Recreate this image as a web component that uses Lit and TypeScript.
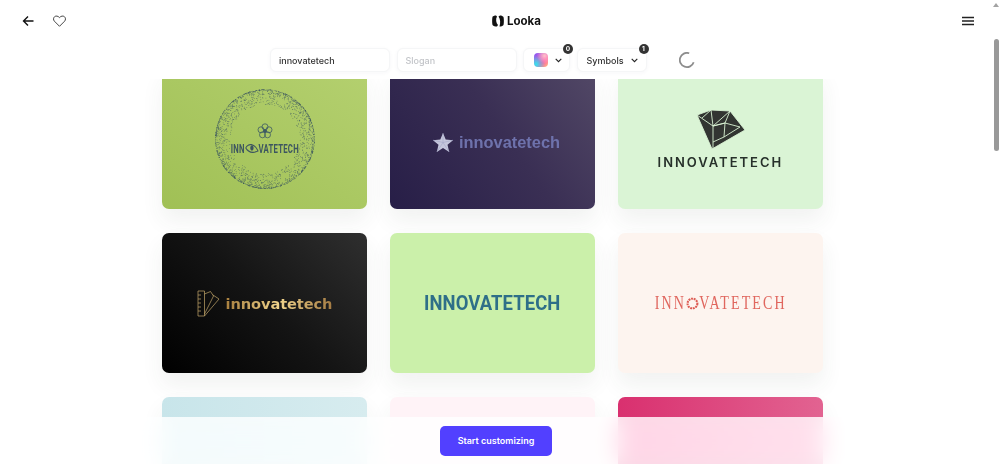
import { LitElement, html, css, svg } from "lit";
import { customElement } from "lit/decorators.js";

function dots() {
  let s = 12345;
  const rnd = () => ((s = (s * 16807) % 2147483647) / 2147483647);
  const out = [];
  for (let i = 0; i < 1900; i++) {
    const a = rnd() * Math.PI * 2;
    const r = 49.500 - Math.pow(rnd(), 2.800) * 15;
    out.push(svg`<circle cx=${50 + r * Math.cos(a)} cy=${50 + r * Math.sin(a)} r="0.38"></circle>`);
  }
  return out;
}
const DOTS = dots();

@customElement("app-root")
export class AppRoot extends LitElement {
  static styles = css`
    :host { display: block; width: 1000px; height: 464px; overflow: hidden; background: #fff; font-family: Inter, "Liberation Sans", sans-serif; color: #222; position: relative; }
    .page { display: grid; grid-template-columns: 992px 8px; height: 464px; }
    .main { display: flex; flex-direction: column; height: 464px; overflow: hidden; position: relative; }
    header { height: 79px; flex: none; background: #fff; position: relative; z-index: 2; }
    .top { display: grid; grid-template-columns: 492px 1fr auto; align-items: center; height: 41px; }
    .left { display: flex; gap: 19px; padding-left: 22px; align-items: center; }
    .brand { display: flex; align-items: center; gap: 3px; font-weight: 700; font-size: 11.5px; color: #111; }
    .menu { display: flex; margin-right: 18px; }
    svg { display: block; }
    .tools { display: flex; gap: 6.5px; padding-left: 270px; padding-top: 7px; align-items: center; }
    .field { box-sizing: border-box; height: 24px; border-radius: 6px; border: 1px solid #f5f6f7; box-shadow: 0 1px 4px rgba(40, 60, 90, .04); display: flex; align-items: center; position: relative; background: #fff; font-size: 9px; font-weight: 500; color: #333; }
    .input { width: 120px; padding-left: 8px; }
    .ph { color: #c2c4c8; }
    .color { width: 47px; padding-left: 10px; gap: 7px; }
    .swatch { width: 14px; height: 14px; border-radius: 4px; background: radial-gradient(circle at 75% 20%, #ffc2c8 0, transparent 50%), radial-gradient(circle at 15% 80%, #2fe6f0 0, transparent 55%), linear-gradient(135deg, #7a5cff, #ff4fb0 60%, #ffc27a); }
    .sym { width: 70px; padding-left: 9px; gap: 7px; }
    .badge { position: absolute; top: -5px; width: 10px; height: 10px; border-radius: 50%; background: #333; color: #fff; font-size: 6.5px; font-weight: 700; display: flex; align-items: center; justify-content: center; }
    .color .badge { right: -4px; }
    .sym .badge { right: -3px; }
    .spin { margin-left: 25.5px; }
    .scroll { flex: 1; min-height: 0; overflow: hidden; }
    .grid { display: grid; grid-template-columns: repeat(3, 205px); gap: 24px 23px; padding-left: 162px; margin-top: -10px; }
    .card { height: 140px; border-radius: 7px; display: flex; flex-direction: column; align-items: center; justify-content: center; box-shadow: 0 12px 22px rgba(60, 70, 60, .07); }
    .c1 { background: linear-gradient(to top right, #a0c055, #b4d06f); }
    .c2 { background: linear-gradient(55deg, #271e47, #3a2f54 55%, #524866); }
    .c3 { background: #daf4d5; }
    .c4 { background: linear-gradient(45deg, #000, #141414 50%, #2f2f2f); }
    .c5 { background: #cbf0aa; }
    .c6 { background: #fdf4ef; }
    .c7 { background: linear-gradient(to right, #c8e5ea, #d7ecef); }
    .c8 { background: #fff3f7; }
    .c9 { background: linear-gradient(to right, #d9306f, #e26391); }
    .circle-logo { position: relative; display: flex; align-items: center; justify-content: center; flex-direction: column; width: 100px; height: 100px; }
    .circle-logo > svg.ring { position: absolute; inset: 0; fill: #3a5560; }
    .t1 { display: flex; align-items: center; font-family: Roboto, sans-serif; font-weight: 700; font-size: 12.5px; color: #3d5660; white-space: nowrap; transform: scaleX(.62); letter-spacing: .4px; margin-top: 2px; }
    .row { display: flex; align-items: center; }
    .lift { margin: 6px 0 0 8px; }
    .t2 { font-family: "Liberation Sans", sans-serif; font-weight: 700; font-size: 16.4px; color: #6e72ac; margin-left: 6px; }
    .t3 { font-family: Inter, sans-serif; font-weight: 600; font-size: 12.5px; letter-spacing: 1.9px; color: #26302a; margin-top: 6px; transform: scaleX(1.04); }
    .t4 { font-family: "DejaVu Sans", sans-serif; font-weight: 700; font-size: 14.6px; margin-left: 6px; letter-spacing: -.1px; background: linear-gradient(to right, #a9803f, #f0d48c 50%, #a57c43); -webkit-background-clip: text; background-clip: text; color: transparent; }
    .t5 { font-family: Roboto, sans-serif; font-weight: 700; font-size: 19.5px; letter-spacing: .1px; color: #2e6f88; transform: scaleX(.945); }
    .t6 { display: flex; align-items: center; font-family: "Liberation Serif", serif; font-size: 18px; letter-spacing: 2.7px; color: #e0665e; transform: scaleX(.78); white-space: nowrap; }
    .fade { position: absolute; left: 0; right: 0; bottom: 0; height: 47px; background: rgba(255, 255, 255, .82); backdrop-filter: blur(12px) saturate(1.5); display: flex; justify-content: center; align-items: center; }
    .cta { height: 30px; width: 112px; border-radius: 5px; background: #5240ff; color: #fff; font-size: 9px; font-weight: 600; display: flex; align-items: center; justify-content: center; }
    .bar { background: #fff; position: relative; display: flex; flex-direction: column; align-items: center; }
    .arrow { width: 0; height: 0; border-left: 3px solid transparent; border-right: 3px solid transparent; border-bottom: 4px solid #a3a3a3; margin-top: 3px; }
    .thumb { width: 5px; height: 112px; background: #999; border-radius: 3px; margin-top: 32px; }
  `;

  chev() {
    return html`<svg width="7" height="5" viewBox="0 0 7 5" fill="none" stroke="#222" stroke-width="1.1"><path d="M.7.8L3.500 3.600 6.300.8"/></svg>`;
  }

  render() {
    return html`<div class="page">
      <div class="main">
        <header>
          <div class="top">
            <div class="left">
              <svg width="12" height="12" viewBox="0 0 12 12" fill="none" stroke="#111" stroke-width="1.4"><path d="M11.5 6H1.5M6 1.5L1.5 6 6 10.5"/></svg>
              <svg width="13" height="12" viewBox="0 0 13 12" fill="none" stroke="#333" stroke-width=".9"><path d="M6.5 11.3L1.4 6.2C.1 4.8.3 2.8 1.6 1.7 2.9.6 5 .9 6.5 2.6 8 .9 10.100.6 11.400 1.700 12.700 2.800 12.900 4.800 11.600 6.200z"/></svg>
            </div>
            <div class="brand">
              <svg width="12" height="12" viewBox="0 0 12 12" fill="#111"><path d="M4 .5C2.500.5 1 1.200.5 1.800 0 4 0 8 .5 10 1.500 11 3 11.500 5 11.500L6 10C4 8 3.500 4 5 1.500z"/><path d="M8 .5C9.500.5 11 1.200 11.500 2 12 4 12 8 11.500 10 10.500 11 9 11.500 7.500 11.500 8.500 8 8.500 4 6.500 1.500z"/></svg>
              <span>Looka</span>
            </div>
            <div class="menu">
              <svg width="12" height="10" viewBox="0 0 12 10" stroke="#222" stroke-width="1.400"><path d="M0 1.500h12M0 5h12M0 8.500h12"/></svg>
            </div>
          </div>
          <div class="tools">
            <div class="field input">innovatetech</div>
            <div class="field input ph">Slogan</div>
            <div class="field color"><span class="swatch"></span>${this.chev()}<span class="badge">0</span></div>
            <div class="field sym"><span>Symbols</span>${this.chev()}<span class="badge">1</span></div>
            <div class="spin">
              <svg width="16" height="16" viewBox="0 0 18 18" fill="none" stroke="#8d8d8d" stroke-width="2"><path d="M16.500 11.500A8 8 0 1 1 11.500 1.400"/></svg>
            </div>
          </div>
        </header>
        <div class="scroll">
          <div class="grid">
            <div class="card c1">
              <div class="circle-logo">
                <svg class="ring" width="100" height="100" viewBox="0 0 100 100">${DOTS}</svg>
                <svg width="16" height="16" viewBox="0 0 16 16" fill="none" stroke="#3e5a63" stroke-width=".8"><circle cx="8" cy="3.800" r="3"/><circle cx="12" cy="6.800" r="3"/><circle cx="10.500" cy="11.800" r="3"/><circle cx="5.500" cy="11.800" r="3"/><circle cx="4" cy="6.800" r="3"/><circle cx="8" cy="8" r="1.500" fill="#3e5a63"/></svg>
                <div class="t1"><span>INN</span><svg width="22" height="10" viewBox="0 0 22 10" fill="none" stroke="#3d5660" stroke-width="1.300"><path d="M1 5C5 0 15 0 21 8 14 10 6 10 1 5z"/><circle cx="11" cy="5" r="2" fill="#3d5660"/></svg><span>VATETECH</span></div>
              </div>
            </div>
            <div class="card c2">
              <div class="row lift">
                <svg width="20" height="19" viewBox="0 0 20 19"><path d="M10 0l2.700 6.500L20 7.200l-5.500 4.500L16.200 19 10 15l-6.200 4 1.700-7.300L0 7.200l7.300-.7z" fill="#c5c6dc"/><path d="M10 0v9.500L0 7.200M10 9.500l6.200 9.500M10 9.500L3.800 19M10 9.500L20 7.200" stroke="#9fa1c2" stroke-width=".5" fill="none"/></svg>
                <span class="t2">innovatetech</span>
              </div>
            </div>
            <div class="card c3">
              <svg width="50" height="40" viewBox="0 0 50 40" fill="#323532" stroke="#daf4d5" stroke-width=".9"><path d="M1 6L15 1 34 2 49 21 16 40z"/><path fill="none" d="M1 6l16 11 17-15M15 1l2 16 0 23M17 17l12-3 15 4M34 2l-5 12-12 3M29 14l-1 14M44 18L28 28 17 33M15 1L6 9"/></svg>
              <div class="t3">INNOVATETECH</div>
            </div>
            <div class="card c4">
              <div class="row">
                <svg width="23" height="27" viewBox="0 0 23 27" fill="none" stroke="#c4a76a" stroke-width=".7"><path d="M1 1h6.500v25H1zM1 5h3M1 9h3M1 13h3M1 17h3M1 21h3"/><path d="M7.500 4L13.500 1.500 16.500 6 7.500 24"/><path d="M16 5L22 9 7.500 26"/></svg>
                <span class="t4">innovatetech</span>
              </div>
            </div>
            <div class="card c5"><span class="t5">INNOVATETECH</span></div>
            <div class="card c6">
              <div class="t6"><span>INN</span><svg width="17" height="13" viewBox="0 0 14 14" preserveAspectRatio="none" fill="none" stroke="#dd5a52" stroke-width="2.200" stroke-dasharray="2 .8"><circle cx="7" cy="7" r="5.200"/></svg><span>VATETECH</span></div>
            </div>
            <div class="card c7"></div>
            <div class="card c8"></div>
            <div class="card c9"></div>
          </div>
        </div>
        <div class="fade"><div class="cta">Start customizing</div></div>
      </div>
      <div class="bar"><span class="arrow"></span><span class="thumb"></span></div>
    </div>`;
  }
}
